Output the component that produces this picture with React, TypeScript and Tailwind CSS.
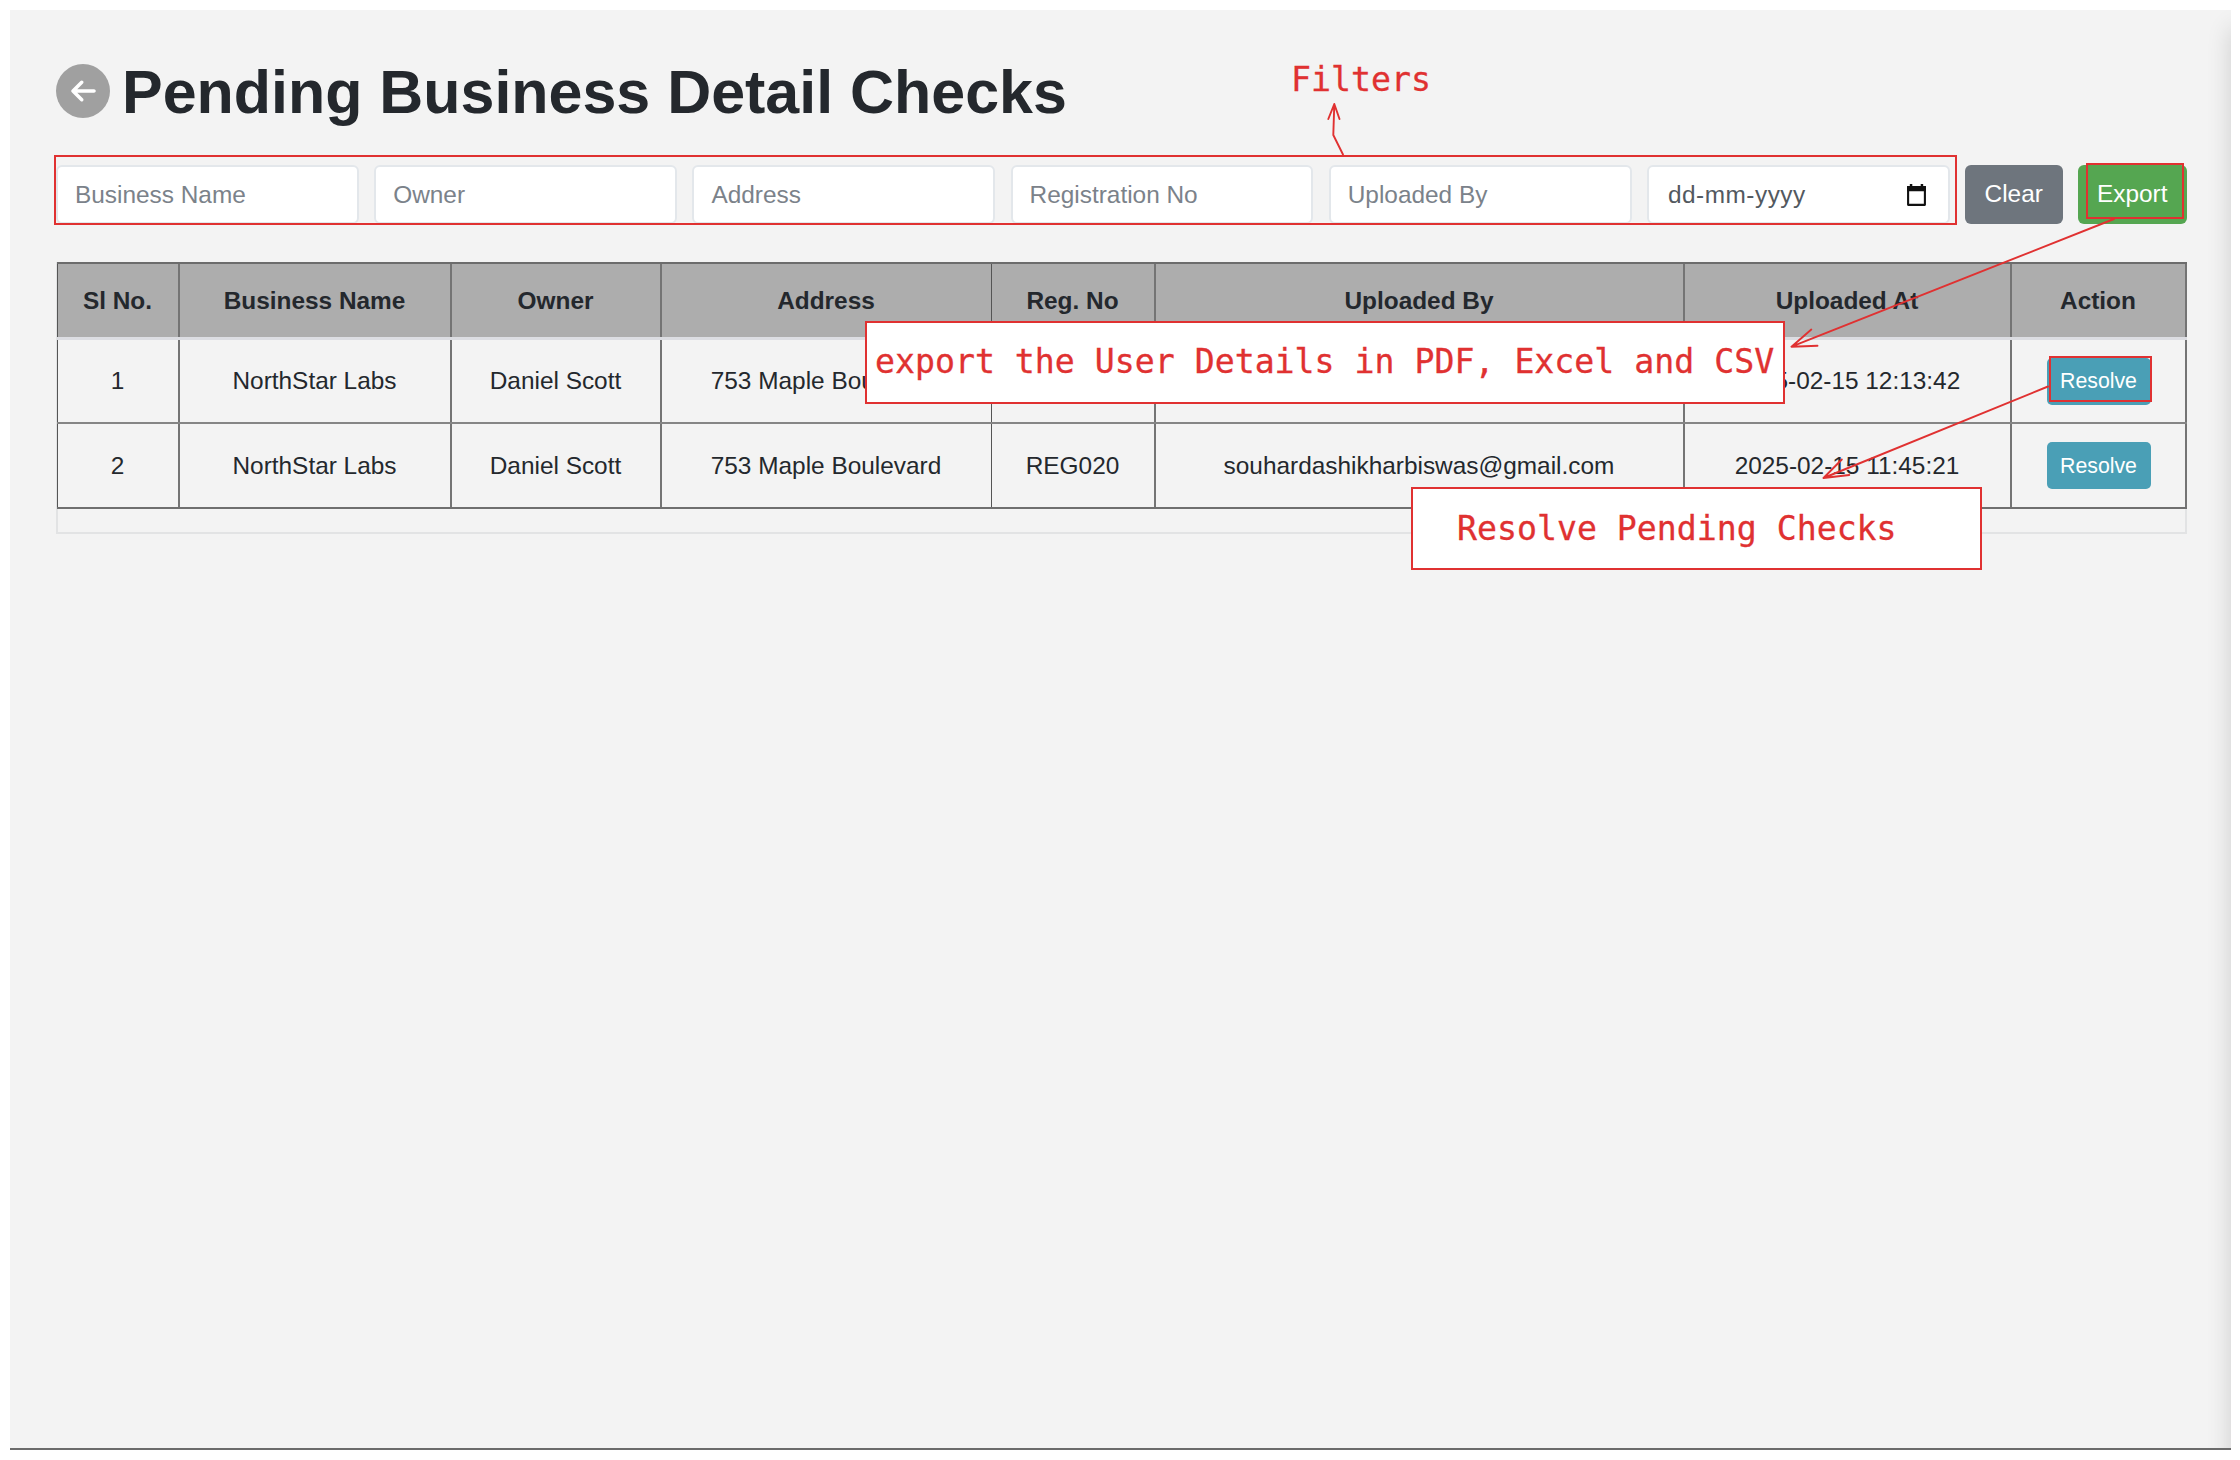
import { FaArrowLeft } from "react-icons/fa6";

const filters = ["Business Name", "Owner", "Address", "Registration No", "Uploaded By"];

const headers = ["Sl No.", "Business Name", "Owner", "Address", "Reg. No", "Uploaded By", "Uploaded At", "Action"];

const rows = [
  ["1", "NorthStar Labs", "Daniel Scott", "753 Maple Boulevard", "REG020", "souhardashikharbiswas@gmail.com", "2025-02-15 12:13:42"],
  ["2", "NorthStar Labs", "Daniel Scott", "753 Maple Boulevard", "REG020", "souhardashikharbiswas@gmail.com", "2025-02-15 11:45:21"],
];

const columns = "grid grid-cols-[121px_272px_210px_331px_163px_529px_327px_177px]";

function cellBorder(i: number) {
  if (i === 0 || i === 4) return "border-l border-[#555555]";
  return "border-l-2 border-[#747474]";
}

function CalendarIcon() {
  return (
    <svg width="21" height="23" viewBox="0 0 22 23" preserveAspectRatio="none" fill="none">
      <path d="M2.2 3.2h17.6v17.6H2.2z" stroke="#111" strokeWidth="2.2" strokeLinejoin="round" />
      <path d="M1.1 2.1h19.8v5.2H1.1zM4 0h2.6v3H4zM15.4 0H18v3h-2.6z" fill="#111" />
    </svg>
  );
}

function BusinessTable() {
  return (
    <div className="mt-[38px] h-[272px] w-[2131px] border-2 border-[#e2e3e4]">
      <div className="-ml-px -mt-[2px] w-[2130px]">
        <div className={`${columns} h-[75px] border-t-2 border-[#6c6c6c] bg-[#adadad]`}>
          {headers.map((h, i) => (
            <div key={h} className={`flex items-center justify-center pr-px pt-[2px] font-bold ${cellBorder(i)} ${i === 7 ? "border-r-2" : ""}`}>
              {h}
            </div>
          ))}
        </div>
        <div className="h-[3px] bg-[#dcdde2]" />
        {rows.map((row, r) => (
          <div key={row[0]} className={`${columns} ${r === 0 ? "h-[84px] border-b-2 border-[#858585]" : "h-[85px] border-b-2 border-[#6f6f6f]"}`}>
            {row.map((cell, i) => (
              <div key={i} className={`flex items-center justify-center whitespace-nowrap pr-px pt-px ${cellBorder(i)}`}>
                {cell}
              </div>
            ))}
            <div className="flex items-center justify-center border-x-2 border-[#747474]">
              <button className="h-[47px] w-[104px] rounded-[5px] bg-[#4a9fb6] pt-[2px] text-[21.3px] text-white">Resolve</button>
            </div>
          </div>
        ))}
      </div>
    </div>
  );
}

function Annotations() {
  const note = "absolute whitespace-pre border-2 border-[#e03131] bg-white";
  return (
    <div className="pointer-events-none absolute inset-0 font-['Comic_Shanns','DejaVu_Sans_Mono',monospace] text-[33.2px] leading-[40px] text-[#e03131] [-webkit-text-stroke:0.3px_#e03131]">
      <div className="absolute left-[54px] top-[155px] h-[70px] w-[1903px] border-2 border-[#e03131]" />
      <div className="absolute left-[2086px] top-[163px] h-[56px] w-[98px] border-2 border-[#e03131]" />
      <div className="absolute left-[2049px] top-[356px] h-[46px] w-[103px] border-2 border-[#e03131]" />
      <div className="absolute left-[1291px] top-[60px]">Filters</div>
      <div className={`${note} left-[865px] top-[321px] h-[83px] w-[920px] pl-[8px] pt-[19px]`}>export the User Details in PDF, Excel and CSV</div>
      <div className={`${note} left-[1411px] top-[487px] h-[83px] w-[571px] pl-[44px] pt-[20px]`}>Resolve Pending Checks</div>
      <svg className="absolute inset-0" width="2240" height="1460" fill="none" stroke="#e03131" strokeWidth="1.9" strokeLinecap="round" strokeLinejoin="round">
        <path d="M1343 154.500L1333.300 135L1334.300 104M1328.300 119L1334.300 104L1339.500 119" />
        <path d="M2114 219L1791.500 346.700M1811.300 329.500L1791.500 346.700L1817.500 345.700" />
        <path d="M2048 386.500L1823.500 478M1841.800 459.500L1823.500 478L1849.300 475" />
      </svg>
    </div>
  );
}

export default function App() {
  return (
    <div className="relative h-[1460px] w-[2240px] bg-white p-[10px] font-['Liberation_Sans',Arial,sans-serif] text-[24.4px] text-[#24282d]">
      <main className="relative h-[1440px] w-[2221px] overflow-hidden border-b-2 border-[#6b6b6b] bg-[#f3f3f3] pl-[46px] pt-[43px]">
        <header className="flex h-[76px] items-center">
          <button className="flex h-[54px] w-[54px] items-center justify-center rounded-full bg-[#a0a0a0] text-white">
            <FaArrowLeft className="h-[28px] w-[25px]" />
          </button>
          <h1 className="ml-[12px] whitespace-nowrap pt-[3px] text-[60.95px] font-bold leading-none">Pending Business Detail Checks</h1>
        </header>
        <div className="mt-[36px] flex h-[59px] items-center">
          <div className="flex gap-[15.4px]">
            {filters.map((f) => (
              <input
                key={f}
                placeholder={f}
                className="h-[59px] w-[302.8px] rounded-[6px] border-2 border-[#e3e7eb] bg-white px-[17px] pt-[1px] placeholder:text-[#7b828a]"
              />
            ))}
            <div className="flex h-[59px] w-[302.8px] items-center justify-between rounded-[6px] border-2 border-[#e3e7eb] bg-white pl-[19px] pr-[21px] pt-[1px] tracking-[0.5px] text-[#53595f]">
              dd-mm-yyyy
              <CalendarIcon />
            </div>
          </div>
          <button className="ml-[15px] h-[59px] w-[98px] rounded-[6px] bg-[#6e757d] text-white">Clear</button>
          <button className="ml-[15px] h-[59px] w-[109px] rounded-[6px] bg-[#55a651] text-white">Export</button>
        </div>
        <BusinessTable />
        <div className="absolute -right-[20px] top-[18px] h-[1460px] w-[20px] shadow-[0_0_24px_rgba(0,0,0,0.16)]" />
      </main>
      <Annotations />
    </div>
  );
}
